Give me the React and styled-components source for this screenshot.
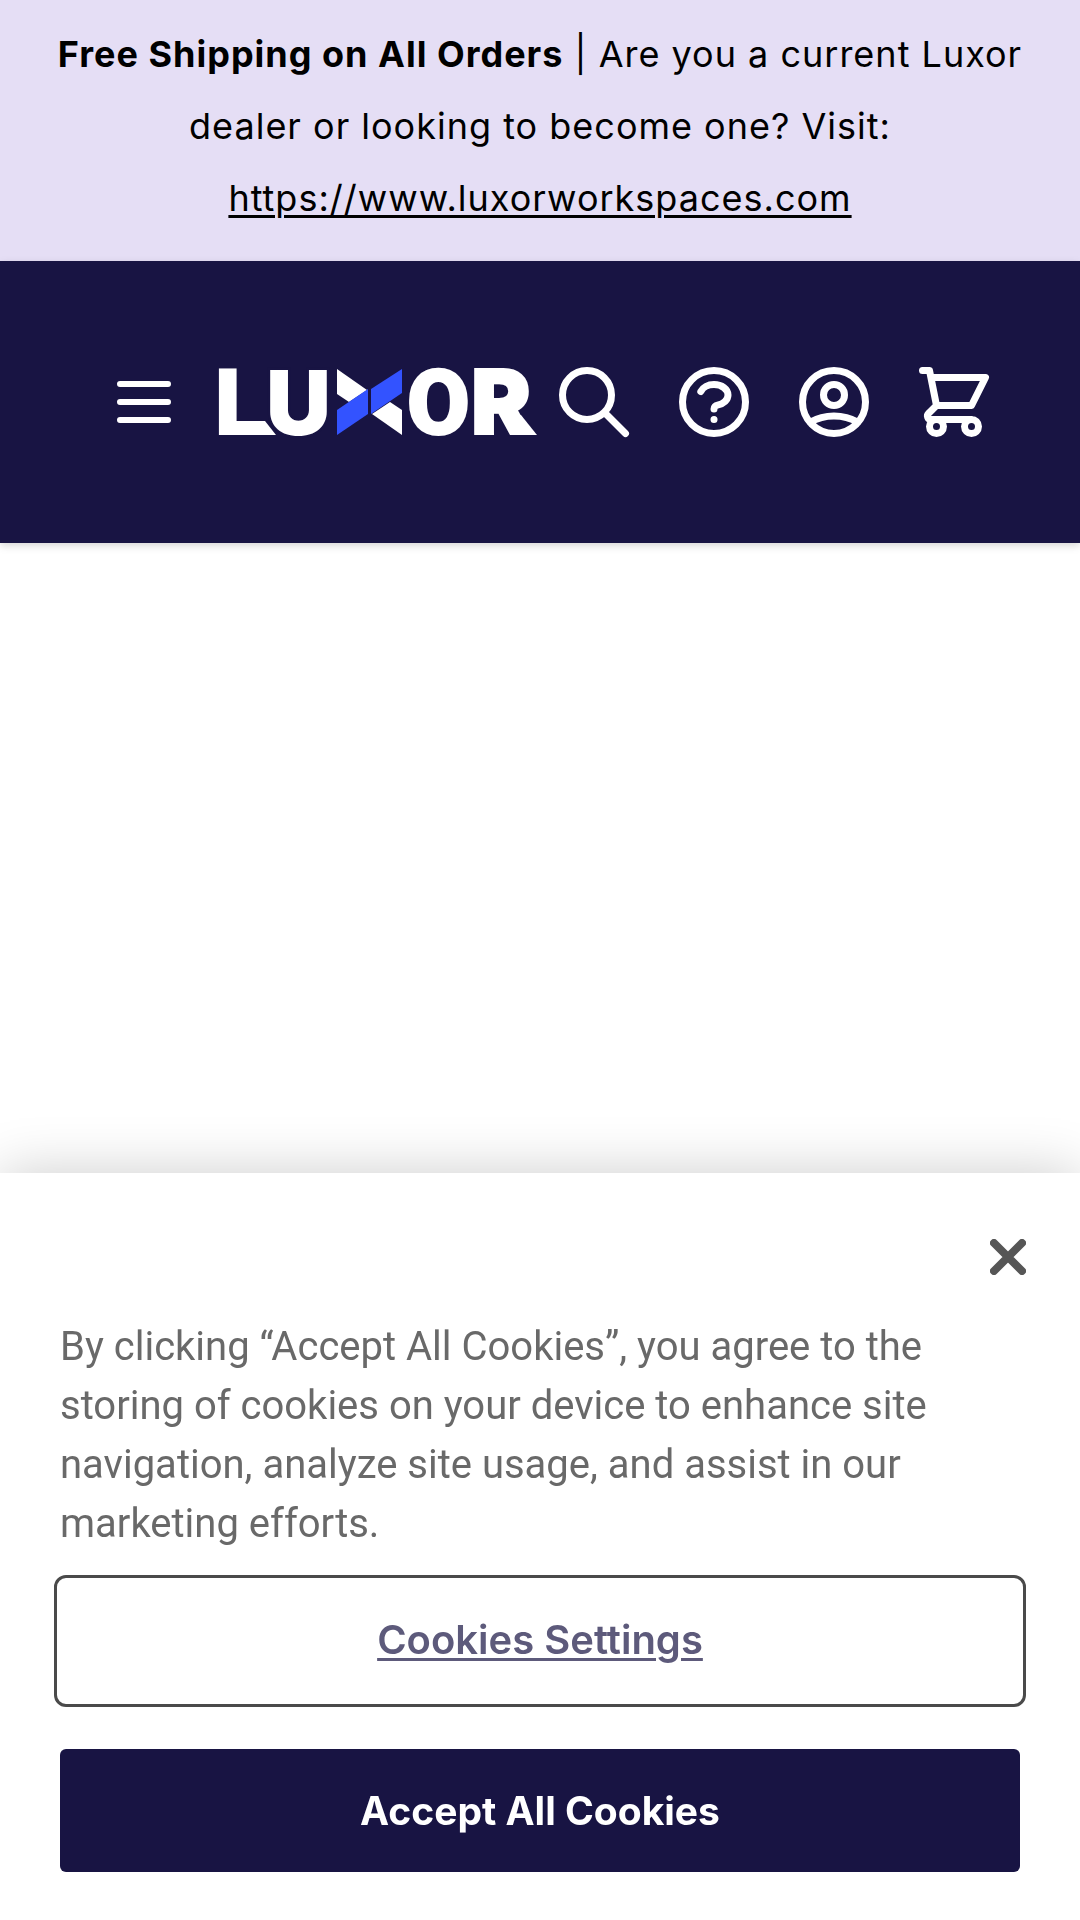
import React, { useState } from 'react';
import styled, { createGlobalStyle } from 'styled-components';

const GlobalStyle = createGlobalStyle`
  * {
    box-sizing: border-box;
  }

  body {
    margin: 0;
    background: #fff;
    font-family: Inter, 'Liberation Sans', sans-serif;
  }

  button {
    font-family: inherit;
    cursor: pointer;
  }
`;

const Page = styled.div`
  min-height: 100vh;
`;

const PromoBar = styled.div`
  padding: 18px 48px 27px;
  background: #e5def5;
  color: #000;
  font-size: 36px;
  line-height: 72px;
  letter-spacing: 1px;
  text-align: center;
`;

const PromoLink = styled.a`
  color: inherit;
  text-decoration: underline;
  text-decoration-thickness: 3px;
  text-underline-offset: 4px;
`;

const Header = styled.header`
  display: flex;
  align-items: center;
  padding: 99px 84px 99px 108px;
  background: #181443;
  color: #fff;
  box-shadow: 0 3px 9px rgba(0, 0, 0, 0.1), 0 3px 6px rgba(0, 0, 0, 0.06);
`;

const IconButton = styled.button`
  display: flex;
  padding: 0;
  border: none;
  background: none;
  color: inherit;
`;

const Icon = styled.svg`
  display: block;
  width: ${props => props.$size}px;
  height: ${props => props.$size}px;
  fill: none;
  stroke: currentColor;
  stroke-width: 2;
  stroke-linecap: round;
  stroke-linejoin: round;
`;

const LogoLink = styled.a`
  display: block;
  margin-left: 38px;
  color: inherit;
`;

const LogoSvg = styled.svg`
  display: block;
  width: 320px;
  height: 68px;
  overflow: visible;
  fill: currentColor;
`;

const LogoLetter = styled.text`
  font-family: ${props => props.$font}, sans-serif;
  font-size: ${props => (props.$font === 'Roboto' ? 91 : 90)}px;
  font-weight: 900;
  stroke: ${props => props.$edge || 'currentColor'};
  stroke-width: ${props => (props.$edge ? 5 : 2)}px;
  paint-order: stroke;
`;

const Actions = styled.nav`
  display: flex;
  gap: 36px;
  margin-left: auto;
`;

const CookiePanel = styled.section`
  position: fixed;
  right: 0;
  bottom: 0;
  left: 0;
  padding: 66px 54px 48px;
  background: #fff;
  box-shadow: 0 0 54px rgba(0, 0, 0, 0.2);
`;

const CloseButton = styled(IconButton)`
  margin-left: auto;
  color: #565656;
`;

const CookieText = styled.p`
  margin: 42px 6px 22px;
  color: #696969;
  font-family: Roboto, 'Liberation Sans', sans-serif;
  font-size: 40px;
  line-height: 59px;
`;

const PanelButtons = styled.div`
  display: flex;
  flex-direction: column;
  gap: 42px;
`;

const SettingsButton = styled.button`
  height: 132px;
  padding: 0 0 4px;
  border: 3px solid #4a4a4a;
  border-radius: 12px;
  background: #fff;
  color: #5d5a7b;
  font-size: 40px;
  font-weight: 600;
  text-decoration: underline;
  text-decoration-thickness: 3px;
  text-underline-offset: 4px;
`;

const AcceptButton = styled.button`
  height: 123px;
  margin: 0 6px;
  border: none;
  border-radius: 6px;
  background: #181443;
  color: #fff;
  font-size: 39px;
  font-weight: 700;
`;

const actions = [
  {
    label: 'Search',
    path: 'M21 21l-6-6m2-5a7 7 0 11-14 0 7 7 0 0114 0z',
  },
  {
    label: 'Help',
    path: 'M8.228 9c.549-1.165 2.03-2 3.772-2 2.21 0 4 1.343 4 3 0 1.4-1.278 2.575-3.006 2.907-.542.104-.994.54-.994 1.093m0 3h.01M21 12a9 9 0 11-18 0 9 9 0 0118 0z',
  },
  {
    label: 'My account',
    path: 'M5.121 17.804A13.937 13.937 0 0112 16c2.5 0 4.847.655 6.879 1.804M15 10a3 3 0 11-6 0 3 3 0 016 0zm6 2a9 9 0 11-18 0 9 9 0 0118 0z',
  },
  {
    label: 'Cart',
    path: 'M3 3h2l.4 2M7 13h10l4-8H5.4M7 13L5.4 5M7 13l-2.293 2.293c-.63.63-.184 1.707.707 1.707H17m0 0a2 2 0 100 4 2 2 0 000-4zm-8 2a2 2 0 11-4 0 2 2 0 014 0z',
  },
];

function Logo() {
  return (
    <LogoLink href="/" aria-label="Luxor">
      <LogoSvg viewBox="0 0 320 68">
        <LogoLetter $font="Roboto" x="-3" y="66">L</LogoLetter>
        <polygon points="42,53 47,53 58,67 42,67" />
        <LogoLetter $font="Inter" $edge="#181443" x="48" y="67">U</LogoLetter>
        {/* crossed ribbons in the middle of the word */}
        <polygon points="119,1 149,22 131,34 119,26" />
        <polygon points="154,46 172,34 184,42 184,67" />
        <polygon points="119,42 150,21 150,46 119,67" fill="#3353ff" />
        <polygon points="153,21 184,1 184,25 153,46" fill="#3353ff" />
        <LogoLetter $font="Roboto" x="189" y="66">O</LogoLetter>
        <LogoLetter $font="Inter" x="253" y="66">R</LogoLetter>
        <polygon points="292,47 303,47 319,67 300,67" />
      </LogoSvg>
    </LogoLink>
  );
}

function App() {
  const [showCookies, setShowCookies] = useState(true);

  const hideCookies = () => setShowCookies(false);

  return (
    <Page>
      <GlobalStyle />
      <PromoBar>
        <strong>Free Shipping on All Orders</strong> | Are you a current Luxor dealer or looking to
        become one? Visit:{' '}
        <PromoLink href="https://www.luxorworkspaces.com">https://www.luxorworkspaces.com</PromoLink>
      </PromoBar>

      <Header>
        <IconButton type="button" aria-label="Menu">
          <Icon $size={72} viewBox="0 0 24 24">
            <path d="M4 6h16M4 12h16M4 18h16" />
          </Icon>
        </IconButton>
        <Logo />
        <Actions>
          {actions.map(action => (
            <IconButton key={action.label} type="button" aria-label={action.label}>
              <Icon $size={84} viewBox="0 0 24 24">
                <path d={action.path} />
              </Icon>
            </IconButton>
          ))}
        </Actions>
      </Header>

      {showCookies && (
        <CookiePanel aria-label="Cookie banner">
          <CloseButton type="button" aria-label="Close" onClick={hideCookies}>
            <Icon $size={36} viewBox="0 0 9 9">
              <path d="M1 1l7 7M8 1l-7 7" />
            </Icon>
          </CloseButton>
          <CookieText>
            By clicking “Accept All Cookies”, you agree to the storing of cookies on your device to
            enhance site navigation, analyze site usage, and assist in our marketing efforts.
          </CookieText>
          <PanelButtons>
            <SettingsButton type="button">Cookies Settings</SettingsButton>
            <AcceptButton type="button" onClick={hideCookies}>Accept All Cookies</AcceptButton>
          </PanelButtons>
        </CookiePanel>
      )}
    </Page>
  );
}

export default App;
